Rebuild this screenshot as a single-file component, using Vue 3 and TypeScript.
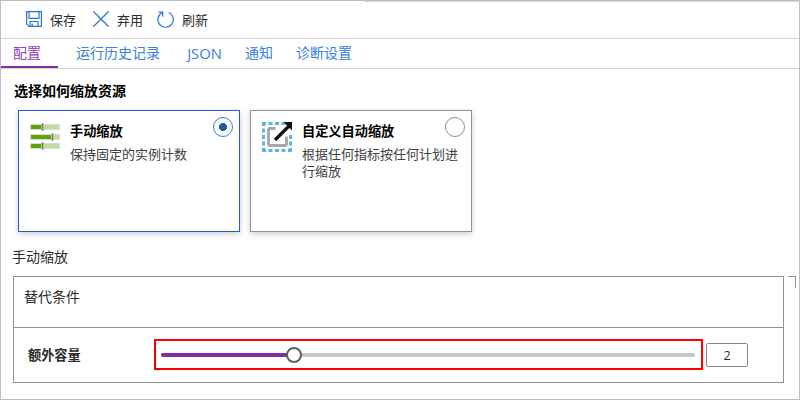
<script setup lang="ts">
import { ref, computed } from 'vue'

const tabs = ['配置', '运行历史记录', 'JSON', '通知', '诊断设置']
const activeTab = ref('配置')
const mode = ref<'manual' | 'custom'>('manual')
const capacity = ref(2)
const maxCapacity = 8
const percent = computed(() => (capacity.value / maxCapacity) * 100)
</script>

<template>
  <div class="page">
    <header class="toolbar">
      <button class="command save">
        <svg width="16" height="16" viewBox="0 0 16 16" fill="none" stroke="#2b76d2">
          <path d="M.6.6h14.8v14.8H3.1L.6 13z" stroke-width="1.2" />
          <path d="M3 .6v6.8h10V.6M4 15.4v-4.9h8v4.9M6.2 12.5v2.9" stroke-width="1.2" />
        </svg>
        <span>保存</span>
      </button>
      <button class="command discard">
        <svg width="16" height="16" viewBox="0 0 16 16" fill="none" stroke="#2b76d2">
          <path d="M.4.4l15.2 15.2M15.6.4L.4 15.6" stroke-width="1.3" />
        </svg>
        <span>弃用</span>
      </button>
      <button class="command refresh">
        <svg width="17" height="17" viewBox="0 0 17 17" fill="none" stroke="#2b76d2">
          <path d="M11.7 1.5A7.7 7.7 0 1 1 5 1.7M1.3 1h4.4v4.7" stroke-width="1.2" />
        </svg>
        <span>刷新</span>
      </button>
    </header>

    <nav class="tabs">
      <button
        v-for="tab in tabs"
        :key="tab"
        class="tab"
        :class="{ active: tab === activeTab, latin: tab === 'JSON' }"
        @click="activeTab = tab"
      >{{ tab }}</button>
    </nav>

    <main class="content">
      <h2 class="heading">选择如何缩放资源</h2>
      <div class="cards">
        <section class="card" :class="{ selected: mode === 'manual' }" @click="mode = 'manual'">
          <svg class="card-icon" width="32" height="32" viewBox="0 0 32 32">
            <path d="M1 2h30v6H1zM1 12h30v6H1zM1 21h30v6H1z" fill="#d9dcd6" />
            <path d="M2 3h28v4H2zM2 13h28v4H2zM2 22h28v4H2z" fill="#c0dd9c" />
            <path d="M2 3h11v4H2zM2 13h20v4H2zM2 22h11v4H2z" fill="#5ea600" />
            <path d="M12 1.500h3v7h-3zM22 11.500h3v7h-3zM12 20.500h3v7h-3z" fill="#b4b4b4" />
            <path d="M13 1.500h1v7h-1zM23 11.500h1v7h-1zM13 20.500h1v7h-1z" fill="#7d7d7d" />
          </svg>
          <div class="card-text">
            <h3>手动缩放</h3>
            <p>保持固定的实例计数</p>
          </div>
          <span class="radio" :class="{ on: mode === 'manual' }"></span>
        </section>
        <section class="card" :class="{ selected: mode === 'custom' }" @click="mode = 'custom'">
          <svg class="card-icon" width="32" height="32" viewBox="0 1 32 32" fill="none">
            <g fill="#62b1d9">
              <path d="M1 1h4v3H4v1H1zM7.500 1h4v3h-4zM14 1h4v3h-4zM20.500 1h4v3h-4z" />
              <path d="M1 7.500h3v4H1zM1 14h3v4H1zM1 20.500h3v4H1zM1 27h3v1h1v3H1z" />
              <path d="M7.500 28h4v3h-4zM14 28h4v3h-4zM20.500 28h4v3h-4zM27 28h1v-1h3v4h-4z" />
              <path d="M28 14h3v4h-3zM28 20.500h3v4h-3z" />
            </g>
            <path d="M14.500 7.500H8.500l-1 1v15l1 1h16l1-1v-8" stroke="#a6a6a6" stroke-width="2.800" />
            <path d="M14 19L28 5" stroke="#111" stroke-width="3.200" />
            <path d="M22.500 1H31v8.500z" fill="#111" />
          </svg>
          <div class="card-text">
            <h3>自定义自动缩放</h3>
            <p>根据任何指标按任何计划进行缩放</p>
          </div>
          <span class="radio" :class="{ on: mode === 'custom' }"></span>
        </section>
      </div>

      <div class="section-label">手动缩放</div>
      <div class="panel-row">
        <section class="panel">
          <div class="condition">替代条件</div>
          <div class="capacity">
            <label>额外容量</label>
            <div class="slider-frame">
              <div class="track">
                <div class="fill" :style="{ width: percent + '%' }"></div>
                <span class="thumb" :style="{ left: percent + '%' }"></span>
              </div>
            </div>
            <div class="number">{{ capacity }}</div>
          </div>
        </section>
        <span class="corner"></span>
      </div>
    </main>
    <span class="top-edge"></span>
  </div>
</template>

<style>
body {
  background: #fff;
}
</style>

<style scoped>
* {
  box-sizing: border-box;
}
.page {
  position: relative;
  width: 800px;
  height: 400px;
  border: 1px solid #c0c0c0;
  overflow: hidden;
  font-family: "Open Sans", "Noto Sans CJK SC", sans-serif;
  font-size: 14px;
  color: #2b2b2b;
  background: #fff;
}
.top-edge {
  position: absolute;
  top: 0;
  left: 364px;
  right: 0;
  height: 1px;
  background: #d6d6d6;
}
button {
  border: 0;
  padding: 0;
  margin: 0;
  background: none;
  font: inherit;
  color: inherit;
}
.toolbar {
  display: flex;
  height: 38px;
  padding-left: 25px;
  border-bottom: 1px solid #d3d3d3;
}
.command {
  display: flex;
  align-items: center;
  gap: 8px;
  height: 36px;
  font-size: 13px;
  white-space: nowrap;
}
.command span {
  padding-top: 1px;
}
.discard {
  margin-left: 17px;
}
.refresh {
  margin-left: 14px;
}
.tabs {
  display: flex;
  height: 30px;
  border-bottom: 1px solid #d3d3d3;
  color: #3a80dc;
}
.tab {
  height: 29px;
  margin-right: 23px;
  padding-bottom: 2px;
  line-height: 26px;
  white-space: nowrap;
}
.tab:nth-child(2) {
  margin-right: 27px;
}
.tab.active {
  width: 57px;
  margin-right: 18px;
  padding-left: 12px;
  padding-bottom: 0;
  border-bottom: 2px solid #8a2da5;
  text-align: left;
  color: #9340b0;
}
.tab.latin {
  width: 35px;
  font-size: 14.800px;
}
.content {
  padding: 12px 3px 0 12px;
}
.heading {
  margin: 0 0 0 1px;
  height: 29px;
  line-height: 20px;
  font-size: 14px;
  font-weight: 700;
  color: #000;
}
.cards {
  display: flex;
  gap: 10px;
  padding-left: 5px;
}
.card {
  display: flex;
  width: 222px;
  height: 122px;
  padding: 11px 6px 0 10px;
  border: 1px solid #919191;
  background: #fff;
  box-shadow: 0 2px 6px rgba(0, 0, 0, 0.2);
  position: relative;
}
.card.selected {
  border-color: #245bd0;
}
.card-icon {
  flex: none;
}
.card-text {
  width: 160px;
  margin-left: 9px;
  padding-top: 1px;
  font-size: 13px;
  line-height: 17px;
}
.card-text h3 {
  margin: 0 0 6px;
  font-size: 13.200px;
  font-weight: 700;
  line-height: 17px;
  color: #000;
}
.card-text p {
  margin: 0;
  color: #404040;
}
.radio {
  position: absolute;
  top: 6px;
  right: 6px;
  width: 20px;
  height: 20px;
  border: 1px solid #8c8c8c;
  border-radius: 50%;
}
.radio.on {
  border-color: #3580d5;
  background: radial-gradient(circle, #1f5ba8 3.700px, transparent 4.300px);
}
.section-label {
  margin-top: 15px;
  margin-left: -1px;
  height: 29px;
  line-height: 20px;
}
.panel-row {
  display: flex;
  gap: 4px;
}
.panel {
  width: 771px;
  height: 107px;
  border: 1px solid #919191;
}
.condition {
  height: 51px;
  padding: 10px 0 0 10px;
  line-height: 20px;
  border-bottom: 1px solid #919191;
}
.capacity {
  display: flex;
  align-items: flex-start;
  padding: 11px 0 0 14px;
}
.capacity label {
  width: 126px;
  line-height: 33px;
  font-size: 13.200px;
  font-weight: 700;
}
.slider-frame {
  width: 549px;
  height: 31px;
  padding: 12px 6px 0 5px;
  border: 2px solid #f00;
}
.track {
  position: relative;
  height: 4px;
  border-radius: 2px;
  background: #c6c6c6;
}
.fill {
  height: 4px;
  border-radius: 2px 0 0 2px;
  background: #8529a7;
}
.thumb {
  position: absolute;
  top: -6px;
  width: 16px;
  height: 16px;
  margin-left: -8.600px;
  border: 2px solid #606060;
  border-radius: 50%;
  background: #fff;
}
.number {
  width: 42px;
  height: 24px;
  margin: 4px 0 0 3px;
  border: 1px solid #8a8a8a;
  border-radius: 2px;
  font-size: 12.500px;
  line-height: 23px;
  text-align: center;
}
.corner {
  width: 8px;
  height: 12px;
  border-top: 1px solid #919191;
  border-right: 1px solid #919191;
}
</style>
